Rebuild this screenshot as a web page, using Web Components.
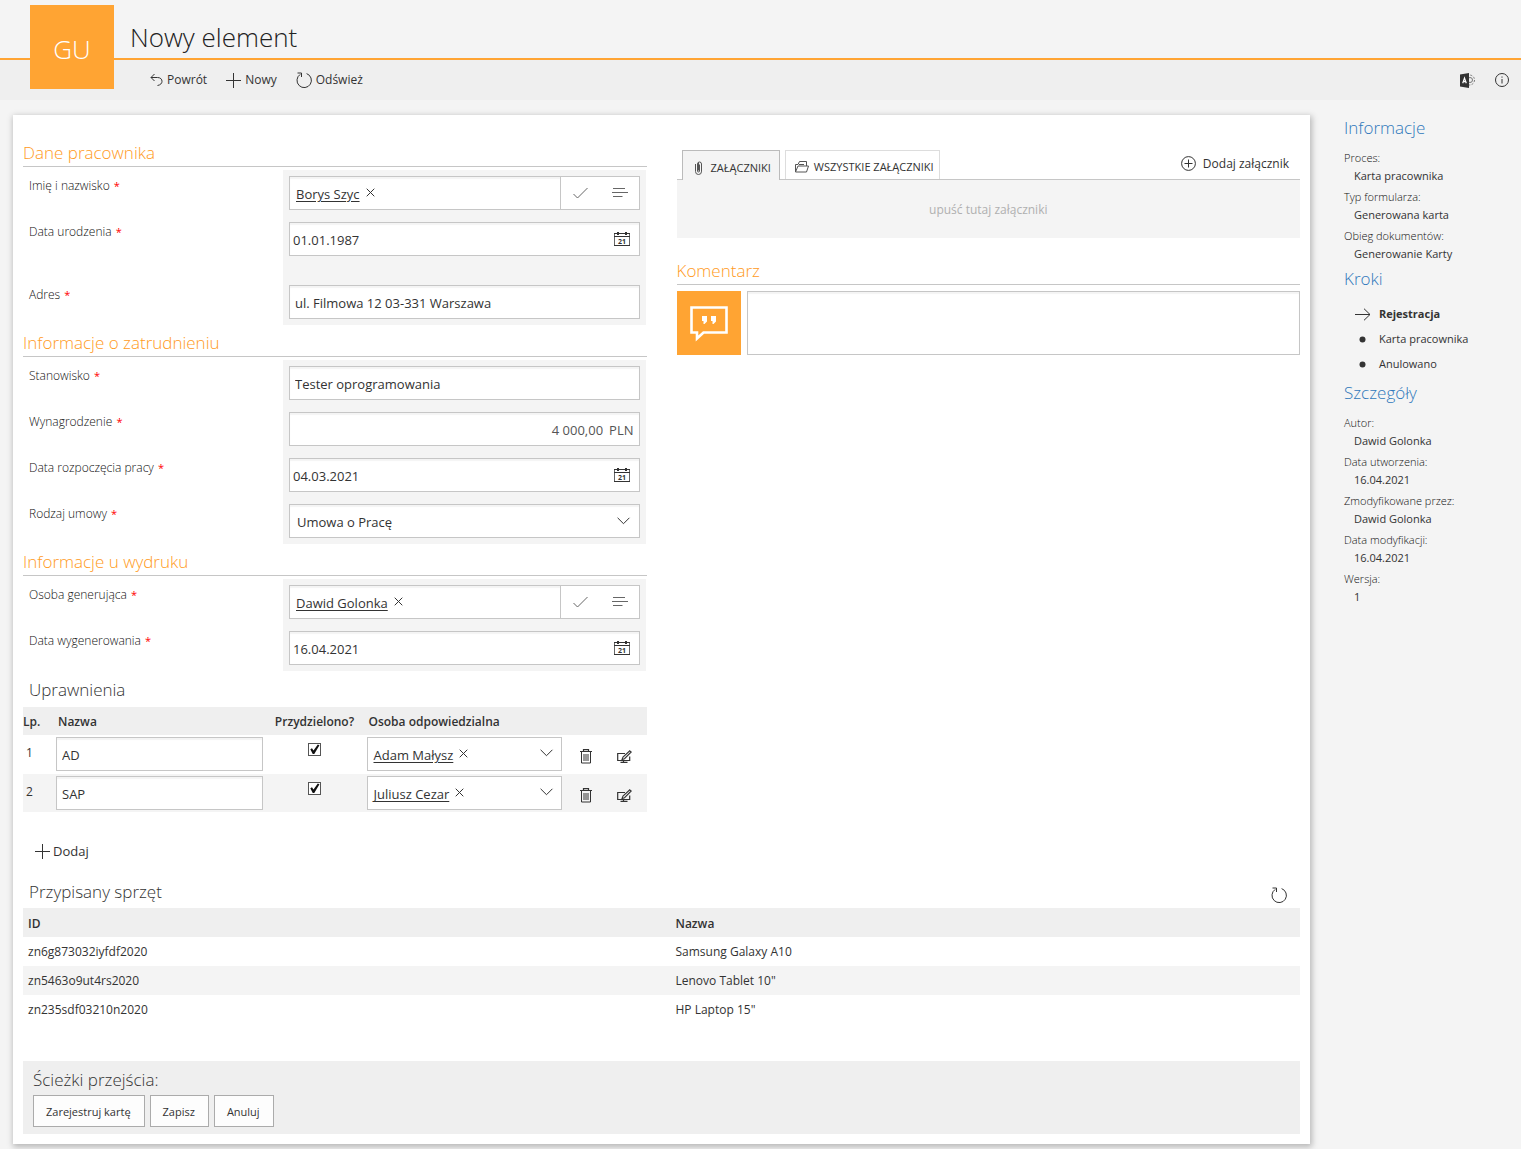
<!DOCTYPE html>
<html lang="pl">
<head>
<meta charset="utf-8">
<meta name="viewport" content="width=device-width, initial-scale=1">
<title>Nowy element</title>
<style>
  html { background: #f4f4f4; }
  body { margin: 0; font: 12px/18px "Open Sans", "Noto Sans", sans-serif; color: #333; }
</style>
</head>
<body>
<workflow-page></workflow-page>

<script>
const BASE = `
  *, *::before, *::after { box-sizing: border-box; }
  h1, h2, p, dl, dd, ul { margin: 0; padding: 0; font-weight: 300; }
  ul { list-style: none; }
  button, input, select, textarea { font: inherit; color: inherit; margin: 0; border-radius: 0; }
  button { background: none; border: 0; padding: 0; display: inline-flex; align-items: center; cursor: pointer; }
  a { color: inherit; }
`;

function define(name, render) {
  customElements.define(name, class extends HTMLElement {
    connectedCallback() {
      if (this.shadowRoot) return;
      const t = document.createElement('template');
      t.innerHTML = render(this);
      this.attachShadow({ mode: 'open' }).append(t.content.cloneNode(true));
    }
  });
}

const ICONS = {
  back: [13, 14, '<path d="M4.500 1 1 4.500l3.500 3.500M1 4.500h6.500C10.500 4.500 12 6.300 12 8.300S10.500 12 7.500 12.500"/>'],
  plus: [15, 15, '<path d="M7.500 0v15M0 7.500h15"/>'],
  refresh: [16, 16, '<path d="M10.600 1.600A7.200 7.200 0 1 1 4.200 2.400"/><path d="M1.500 1H5.500V5"/>'],
  cross: [9, 9, '<path d="M.7.7l7.600 7.600M8.300.7.7 8.300"/>'],
  check: [15, 12, '<path d="M.5 7 4.500 11 14.500 1"/>'],
  lines: [16, 10, '<path d="M1 .5h12M0 4.500h16M1 8.500h9.500"/>'],
  chevron: [13, 8, '<path d="M.6.8 6.500 6.700 12.400.8"/>'],
  calendar: [16, 15, '<path d="M.5 1.500V13.500h15V1.500" stroke="#666"/><path d="M0 1.500h16M0 4.500h16M0 13.500h16"/><path stroke-width="2" d="M4 0v3M12 0v3"/><text x="8" y="11.500" text-anchor="middle" font-size="7" font-weight="700" fill="currentColor" stroke="none">21</text>'],
  clip: [8, 14, '<path d="M.5 3v7.500a3 3 0 0 0 6 0V3a2 2 0 0 0-4 0v7a1 1 0 0 0 2 0V3.500M6.500 3.500v7M3.500 1.500v8" stroke="#555"/>'],
  folder: [14, 12, '<path stroke="#555" d="M.5 11V3.500H3L4.500.5H11.500V5M.5 11 3 5h10.500L11.500 11zM4 3.500H9"/>'],
  add: [15, 15, '<circle cx="7.500" cy="7.500" r="6.900"/><path d="M7.500 3.500v8M3.500 7.500h8"/>'],
  quote: [38, 34, '<path stroke-width="2.600" d="M1.500 1.500h35v25H13.500L7 32.500V26.500H1.500z"/><path fill="currentColor" stroke="none" d="M12 10h5v5.500L14.500 18H13.500V15H12zM21 10h5v5.500L23.500 18H22.500V15H21z"/>'],
  arrow: [16, 13, '<path d="M0 6.500h15M9 .7l6 5.800-6 5.800"/>'],
  dot: [7, 7, '<circle cx="3.500" cy="3.500" r="3" fill="currentColor" stroke="none"/>'],
  info: [14, 14, '<circle cx="7" cy="7" r="6.500"/><path d="M7 6v4.500M7 3.500v1.200"/>'],
  trash: [12, 15, '<path d="M0 2.500h12M3.500 2V.6h5V2" stroke-width="1.200"/><path d="M1.500 3v11h9V3M4 5v7M6 5v7M8 5v7"/>'],
  edit: [15, 13, '<path stroke-width="1.200" d="M8 3.500H.7v7h12V6.500M3.500 12.400h7M6.500 10.500v2"/><path fill="#fff" stroke-width="1.100" d="M12.800.8 14.200 2 7.500 8.700 5 9.600 6 7z"/>'],
  access: [16, 15, '<circle cx="9.500" cy="7" r="5" stroke="#777" stroke-dasharray="2 1.400"/><circle cx="10" cy="7" r="2.500" stroke="#777"/><path fill="currentColor" stroke="none" d="M0 1.500 9 0v15L0 13.500z"/><path stroke="#fff" stroke-width="1.200" d="M2.700 10.300 4.500 5 6.300 10.300M3.300 8.700h2.400"/>']
};

define('ui-icon', el => {
  const [w, h, body] = ICONS[el.getAttribute('name')];
  return `<style>:host { display: inline-flex; flex: none; } svg { display: block; overflow: visible; font-family: "Open Sans", sans-serif; }</style>
  <svg width="${w}" height="${h}" viewBox="0 0 ${w} ${h}" fill="none" stroke="currentColor" aria-hidden="true">${body}</svg>`;
});

define('tool-button', el => `<style>${BASE}
  :host { display: inline-flex; }
  button { gap: var(--gap, 4px); white-space: nowrap; }
</style><button type="button"><ui-icon name="${el.getAttribute('icon')}"></ui-icon><slot></slot></button>`);

define('page-header', () => `<style>${BASE}
  :host { display: block; position: relative; }
  .title { height: 60px; padding: 17px 130px 0; border-bottom: 2px solid #ffa433; }
  h1 { font-size: 26px; line-height: 40px; color: #222; }
  .tile { position: absolute; left: 30px; top: 5px; width: 84px; height: 84px; padding-top: 4px; background: #ffa433; color: #fff;
    display: grid; place-items: center; font-size: 26px; line-height: 40px; font-weight: 300; }
  nav { height: 40px; background: #efefef; padding: 0 12px 0 150px; display: flex; align-items: center; gap: 19px; }
  .end { margin-left: auto; display: flex; align-items: center; gap: 19px; }
</style>
<div class="title"><h1>Nowy element</h1></div>
<nav>
  <tool-button icon="back">Powrót</tool-button>
  <tool-button icon="plus">Nowy</tool-button>
  <tool-button icon="refresh">Odśwież</tool-button>
  <div class="end">
    <button type="button" aria-label="Access"><ui-icon name="access"></ui-icon></button>
    <button type="button" aria-label="Info"><ui-icon name="info"></ui-icon></button>
  </div>
</nav>
<div class="tile">GU</div>`);

define('form-section', el => `<style>${BASE}
  :host { display: block; }
  h2 { height: 32px; padding-top: 5px; font-size: 17px; line-height: 26px; color: #ff9a1c; border-bottom: 1px solid #c6c6c6; margin-bottom: 3px; }
</style><h2>${el.getAttribute('heading')}</h2><slot></slot>`);

const BOX = `
  .box { height: 34px; background: #fff; border: 1px solid #c6c6c6; box-shadow: inset 0 2px 1px #f4f4f4; display: flex; align-items: center; font-size: 13px; line-height: 18px; min-width: 0; }
  .box input { flex: 1; min-width: 0; width: 100%; border: 0; background: none; padding: 2px 5px 0; outline: 0; height: 32px; }
  .chip { display: flex; align-items: center; gap: 6px; padding: 2px 0 0 6px; white-space: nowrap; }
  .chip a { text-underline-offset: 2px; }
  .chip button { padding-bottom: 3px; }
`;

define('form-field', el => {
  const kind = el.getAttribute('kind'), v = el.getAttribute('value');
  const controls = {
    text: `<div class="box"><input id="c" type="text" value="${v}"></div>`,
    date: `<div class="box date"><input id="c" type="text" value="${v}"><button type="button" aria-label="Kalendarz"><ui-icon name="calendar"></ui-icon></button></div>`,
    amount: `<div class="box amount"><input id="c" type="text" value="${v}"><span>PLN</span></div>`,
    select: `<div class="box select"><select id="c"><option>${v}</option></select><ui-icon name="chevron"></ui-icon></div>`,
    person: `<div class="box person"><span class="chip"><a href="#">${v}</a><button type="button" aria-label="Usuń"><ui-icon name="cross"></ui-icon></button></span><input id="c" type="text"><span class="tools"><button type="button" aria-label="Sprawdź"><ui-icon name="check"></ui-icon></button><button type="button" aria-label="Lista"><ui-icon name="lines"></ui-icon></button></span></div>`
  };
  return `<style>${BASE}${BOX}
  :host { display: grid; grid-template-columns: 254px 1fr; padding: 0 1px 0 6px; }
  label { padding-top: 7px; font-weight: 300; color: #111; }
  b { color: #f00; font-weight: 400; font-size: 11px; margin-left: 1px; }
  .cell { background: #f4f4f4; padding: 6px; }
  :host([tall]) .cell { padding-bottom: 23px; }
  .date input { padding: 2px 3px 0; }
  .date button { margin-right: 9px; }
  .amount input { text-align: right; padding-right: 6px; }
  .amount { padding-right: 5px; }
  .amount, .amount span { color: #555; }
  .amount span { padding-top: 2px; }
  .select { display: grid; grid-template-columns: 1fr 22px; }
  select { grid-area: 1 / 1 / 2 / 3; appearance: none; border: 0; background: none; height: 32px; padding: 2px 7px 0; outline: 0; }
  .select ui-icon { grid-area: 1 / 2; pointer-events: none; }
  .tools { height: 32px; border-left: 1px solid #c6c6c6; padding: 0 11px 0 12px; display: flex; align-items: center; gap: 24px; background: #fff; color: #666; }
</style><label for="c">${el.getAttribute('label')} <b>*</b></label><div class="cell">${controls[kind]}</div>`;
});

define('rights-table', () => {
  const rows = [['1', 'AD', 'Adam Małysz'], ['2', 'SAP', 'Juliusz Cezar']].map(([n, name, person]) => `<tr>
    <td class="n">${n}</td>
    <td><div class="box"><input type="text" aria-label="Nazwa ${n}" value="${name}"></div></td>
    <td class="c"><input type="checkbox" aria-label="Przydzielono ${n}" checked></td>
    <td><div class="box flat"><span class="chip"><a href="#">${person}</a><button type="button" aria-label="Usuń"><ui-icon name="cross"></ui-icon></button></span><button class="open" type="button" aria-label="Rozwiń"><ui-icon name="chevron"></ui-icon></button></div></td>
    <td class="i"><button type="button" aria-label="Usuń wiersz"><ui-icon name="trash"></ui-icon></button></td>
    <td class="i"><button type="button" aria-label="Edytuj wiersz"><ui-icon name="edit"></ui-icon></button></td></tr>`).join('');
  return `<style>${BASE}${BOX}
  :host { display: block; }
  h2 { height: 36px; padding: 5px 6px 0; font-size: 17px; line-height: 28px; color: #333; }
  table { width: 100%; table-layout: fixed; border-collapse: collapse; }
  th { height: 28px; background: #efefef; text-align: left; font-weight: 600; padding: 2px 4px 0; white-space: nowrap; }
  th:first-child { padding: 2px 0 0; }
  th.p { text-align: center; }
  td { height: 38px; padding: 2px; vertical-align: top; }
  tbody tr:first-child td { height: 39px; }
  tbody tr:nth-child(2) { background: #f4f4f4; }
  .n { padding: 9px 3px; }
  .c { text-align: center; padding-top: 8px; line-height: 13px; }
  .i { vertical-align: middle; padding: 4px 0 0 16px; line-height: 0; }
  .flat { box-shadow: none; }
  .open { margin: 0 8px 2px auto; }
  input[type=checkbox] { appearance: none; width: 13px; height: 13px; border: 1px solid #555; background: #fff; display: inline-block; vertical-align: top; }
  input[type=checkbox]:checked::before { content: ""; display: block; width: 11px; height: 11px; background: #111; clip-path: polygon(12% 48%, 27% 38%, 41% 60%, 80% 5%, 95% 12%, 48% 90%, 34% 90%); }
  .add { padding: 30px 12px 16px; font-size: 13px; --gap: 3px; }
  .add tool-button { display: flex; }
</style>
<h2>Uprawnienia</h2>
<table><colgroup><col style="width:31px"><col><col style="width:100px"><col style="width:199px"><col style="width:37px"><col style="width:46px"></colgroup>
<thead><tr><th>Lp.</th><th>Nazwa</th><th class="p">Przydzielono?</th><th>Osoba odpowiedzialna</th><th></th><th></th></tr></thead>
<tbody>${rows}</tbody></table>
<div class="add"><tool-button icon="plus">Dodaj</tool-button></div>`;
});

define('attachments-panel', () => `<style>${BASE}
  :host { display: block; padding-top: 15px; }
  .bar { display: flex; align-items: flex-end; gap: 5px; padding: 0 11px 0 5px; border-bottom: 1px solid #c6c6c6; }
  .tab { height: 29px; padding: 4px 5px 0 9px; gap: 5px; font-size: 11px; border: 1px solid #ddd; border-bottom: 0; white-space: nowrap; }
  .tab.on { height: 30px; padding: 4px 8px 0 12px; gap: 8px; background: #f4f4f4; border-color: #bbb; margin-bottom: -1px; }
  .add { margin-left: auto; align-self: center; padding-bottom: 2px; --gap: 7px; }
  .drop { height: 58px; padding-top: 2px; background: #f4f4f4; color: #b0b0b0; display: grid; place-items: center; }
</style>
<div class="bar">
  <button class="tab on" type="button"><ui-icon name="clip"></ui-icon>ZAŁĄCZNIKI</button>
  <button class="tab" type="button"><ui-icon name="folder"></ui-icon>WSZYSTKIE ZAŁĄCZNIKI</button>
  <tool-button class="add" icon="add">Dodaj załącznik</tool-button>
</div>
<div class="drop">upuść tutaj załączniki</div>`);

define('comment-box', () => `<style>${BASE}
  :host { display: block; padding-top: 15px; }
  h2 { font-size: 17px; height: 32px; padding-top: 5px; line-height: 26px; color: #ff9a1c; border-bottom: 1px solid #c6c6c6; margin-bottom: 6px; }
  .row { display: flex; gap: 6px; }
  .tile { width: 64px; height: 64px; background: #ffa433; color: #fff; display: grid; place-items: center; }
  textarea { flex: 1; min-width: 0; height: 64px; border: 1px solid #c6c6c6; box-shadow: inset 0 2px 1px #f4f4f4; background: #fff; resize: none; outline: 0; display: block; }
</style>
<h2><label for="t">Komentarz</label></h2>
<div class="row"><div class="tile"><ui-icon name="quote"></ui-icon></div><textarea id="t"></textarea></div>`);

define('equipment-table', () => `<style>${BASE}
  :host { display: block; }
  header { display: flex; justify-content: space-between; align-items: center; height: 32px; padding: 0 13px 0 6px; }
  h2 { font-size: 17px; line-height: 32px; color: #333; }
  header button { padding-top: 6px; }
  table { width: 100%; table-layout: fixed; border-collapse: collapse; }
  th, td { height: 29px; padding: 0 5px; text-align: left; }
  td:last-child, th:last-child { padding-left: 14px; }
  th { background: #efefef; font-weight: 600; padding-top: 2px; }
  tbody tr:nth-child(2) { background: #f4f4f4; }
</style>
<header><h2>Przypisany sprzęt</h2><button type="button" aria-label="Odśwież"><ui-icon name="refresh"></ui-icon></button></header>
<table><thead><tr><th>ID</th><th>Nazwa</th></tr></thead><tbody>
<tr><td>zn6g873032iyfdf2020</td><td>Samsung Galaxy A10</td></tr>
<tr><td>zn5463o9ut4rs2020</td><td>Lenovo Tablet 10"</td></tr>
<tr><td>zn235sdf03210n2020</td><td>HP Laptop 15"</td></tr>
</tbody></table>`);

define('path-bar', () => `<style>${BASE}
  :host { display: block; background: #efefef; padding: 5px 10px 7px; margin-top: 37px; }
  h2 { font-size: 17px; line-height: 27px; margin-bottom: 2px; color: #333; }
  div { display: flex; gap: 5px; }
  button { height: 32px; padding: 2px 13px 0 12px; border: 1px solid #ababab; background: #fdfdfd; font-size: 11px; }
</style><h2>Ścieżki przejścia:</h2>
<div><button type="button">Zarejestruj kartę</button><button type="button">Zapisz</button><button type="button">Anuluj</button></div>`);

define('info-panel', () => {
  const list = items => `<dl>${items.map(([k, v]) => `<div><dt>${k}:</dt><dd>${v}</dd></div>`).join('')}</dl>`;
  return `<style>${BASE}
  :host { display: flex; flex-direction: column; gap: 5px; font-size: 11px; padding-top: 1px; }
  h2 { font-size: 17px; line-height: 24px; margin-bottom: 9px; color: #2f78bb; }
  ul { padding-top: 1px; }
  dl { display: flex; flex-direction: column; gap: 4px; }
  dt { font-weight: 300; line-height: 18px; color: #111; }
  dd { padding-left: 10px; line-height: 17px; }
  dd, li { font-weight: 400; }
  li { display: grid; grid-template-columns: 17px 1fr; justify-items: center; gap: 8px; align-items: center; line-height: 25px; padding-left: 10px; }
  li span { justify-self: start; }
  li ui-icon { padding-top: 2px; }
  .on { font-weight: 700; }
</style>
<section><h2>Informacje</h2>${list([['Proces', 'Karta pracownika'], ['Typ formularza', 'Generowana karta'], ['Obieg dokumentów', 'Generowanie Karty']])}</section>
<section><h2>Kroki</h2><ul><li class="on"><ui-icon name="arrow"></ui-icon><span>Rejestracja</span></li><li><ui-icon name="dot"></ui-icon><span>Karta pracownika</span></li><li><ui-icon name="dot"></ui-icon><span>Anulowano</span></li></ul></section>
<section><h2>Szczegóły</h2>${list([['Autor', 'Dawid Golonka'], ['Data utworzenia', '16.04.2021'], ['Zmodyfikowane przez', 'Dawid Golonka'], ['Data modyfikacji', '16.04.2021'], ['Wersja', '1']])}</section>`;
});

define('workflow-page', () => `<style>${BASE}
  :host { display: block; }
  .body { display: grid; grid-template-columns: 1fr 177px; column-gap: 34px; align-items: start; padding: 15px 0 5px 13px; }
  main { background: #fff; padding: 20px 10px 10px; box-shadow: 1px 2px 6px 1px rgba(0, 0, 0, .25); }
  .cols { display: grid; grid-template-columns: 1fr 1fr; column-gap: 30px; align-items: start; }
</style>
<page-header></page-header>
<div class="body">
  <main>
    <div class="cols">
      <div>
        <form-section heading="Dane pracownika">
          <form-field label="Imię i nazwisko" kind="person" value="Borys Szyc"></form-field>
          <form-field label="Data urodzenia" kind="date" value="01.01.1987" tall></form-field>
          <form-field label="Adres" kind="text" value="ul. Filmowa 12 03-331 Warszawa"></form-field>
        </form-section>
        <form-section heading="Informacje o zatrudnieniu">
          <form-field label="Stanowisko" kind="text" value="Tester oprogramowania"></form-field>
          <form-field label="Wynagrodzenie" kind="amount" value="4 000,00"></form-field>
          <form-field label="Data rozpoczęcia pracy" kind="date" value="04.03.2021"></form-field>
          <form-field label="Rodzaj umowy" kind="select" value="Umowa o Pracę"></form-field>
        </form-section>
        <form-section heading="Informacje u wydruku">
          <form-field label="Osoba generująca" kind="person" value="Dawid Golonka"></form-field>
          <form-field label="Data wygenerowania" kind="date" value="16.04.2021"></form-field>
        </form-section>
        <rights-table></rights-table>
      </div>
      <div>
        <attachments-panel></attachments-panel>
        <comment-box></comment-box>
      </div>
    </div>
    <equipment-table></equipment-table>
    <path-bar></path-bar>
  </main>
  <info-panel></info-panel>
</div>`);
</script>
</body>
</html>
